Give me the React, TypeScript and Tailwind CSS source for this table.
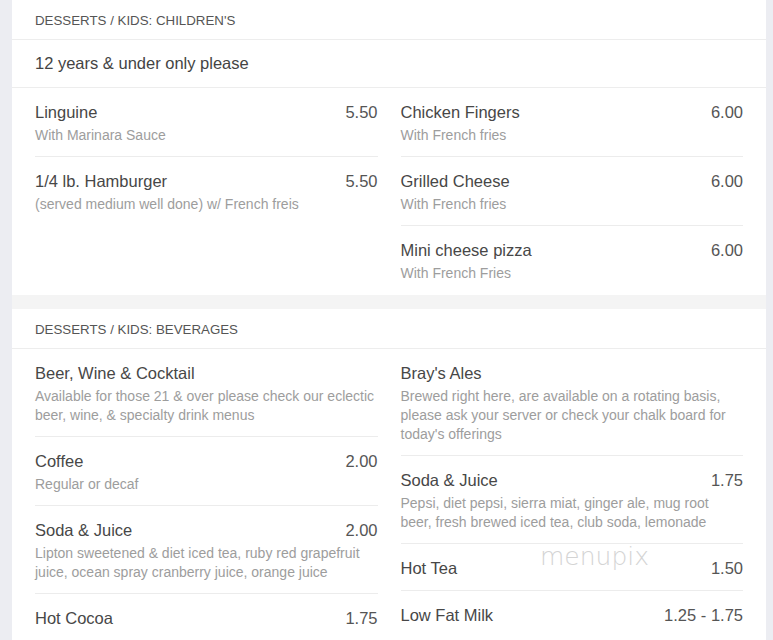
type Item = {
  name: string;
  price?: string;
  desc?: string;
};

type Section = {
  title: string;
  note?: string;
  left: Item[];
  right: Item[];
};

const sections: Section[] = [
  {
    title: "Desserts / Kids: Children's",
    note: "12 years & under only please",
    left: [
      { name: "Linguine", price: "5.50", desc: "With Marinara Sauce" },
      { name: "1/4 lb. Hamburger", price: "5.50", desc: "(served medium well done) w/ French freis" },
    ],
    right: [
      { name: "Chicken Fingers", price: "6.00", desc: "With French fries" },
      { name: "Grilled Cheese", price: "6.00", desc: "With French fries" },
      { name: "Mini cheese pizza", price: "6.00", desc: "With French Fries" },
    ],
  },
  {
    title: "Desserts / Kids: Beverages",
    left: [
      {
        name: "Beer, Wine & Cocktail",
        desc: "Available for those 21 & over please check our eclectic beer, wine, & specialty drink menus",
      },
      { name: "Coffee", price: "2.00", desc: "Regular or decaf" },
      {
        name: "Soda & Juice",
        price: "2.00",
        desc: "Lipton sweetened & diet iced tea, ruby red grapefruit juice, ocean spray cranberry juice, orange juice",
      },
      { name: "Hot Cocoa", price: "1.75" },
    ],
    right: [
      {
        name: "Bray's Ales",
        desc: "Brewed right here, are available on a rotating basis, please ask your server or check your chalk board for today's offerings",
      },
      {
        name: "Soda & Juice",
        price: "1.75",
        desc: "Pepsi, diet pepsi, sierra miat, ginger ale, mug root beer, fresh brewed iced tea, club soda, lemonade",
      },
      { name: "Hot Tea", price: "1.50" },
      { name: "Low Fat Milk", price: "1.25 - 1.75" },
    ],
  },
];

const MenuItem = ({ item, last }: { item: Item; last: boolean }) => (
  <div className={`pt-[13px] pb-[11px] ${last ? "" : "border-b border-[#ececec]"}`}>
    <div className="flex items-start justify-between gap-4">
      <span className="text-[16.5px] leading-[22px] text-[#474747]">{item.name}</span>
      {item.price && (
        <span className="text-[16.5px] leading-[22px] text-[#555] whitespace-nowrap">{item.price}</span>
      )}
    </div>
    {item.desc && (
      <p className="mt-[3px] text-[14px] leading-[19px] text-[#9d9d9d]">{item.desc}</p>
    )}
  </div>
);

const MenuCard = ({ section }: { section: Section }) => (
  <div className="bg-white pb-px">
    <div className="h-[40px] pt-[2px] px-[23px] flex items-center border-b border-[#ededed]">
      <h3 className="text-[13.3px] uppercase text-[#555]">{section.title}</h3>
    </div>
    {section.note && (
      <div className="h-[48px] px-[23px] flex items-center border-b border-[#ededed]">
        <p className="text-[16.5px] text-[#444]">{section.note}</p>
      </div>
    )}
    <div className="grid grid-cols-2 gap-x-[23px] px-[23px]">
      <div className="flex flex-col">
        {section.left.map((item, i) => (
          <MenuItem key={item.name + i} item={item} last={i === section.left.length - 1} />
        ))}
      </div>
      <div className="flex flex-col">
        {section.right.map((item, i) => (
          <MenuItem key={item.name + i} item={item} last={i === section.right.length - 1} />
        ))}
      </div>
    </div>
  </div>
);

export default function App() {
  return (
    <div
      className="relative min-h-[640px] bg-[#ecedf2] pl-3 pr-[7px] overflow-hidden"
      style={{ fontFamily: '"Liberation Sans", Arial, sans-serif' }}
    >
      <div className="w-[754px] min-h-[640px] bg-[#f4f4f4] flex flex-col gap-[14px]">
        {sections.map((s) => (
          <MenuCard key={s.title} section={s} />
        ))}
      </div>
      {/* watermark */}
      <div
        className="absolute left-[540px] top-[542px] text-[25px] leading-[30px] text-[#d4d4d4] pointer-events-none select-none"
        style={{ fontFamily: '"DejaVu Sans", sans-serif', fontWeight: 200 }}
      >
        menupix
      </div>
    </div>
  );
}
